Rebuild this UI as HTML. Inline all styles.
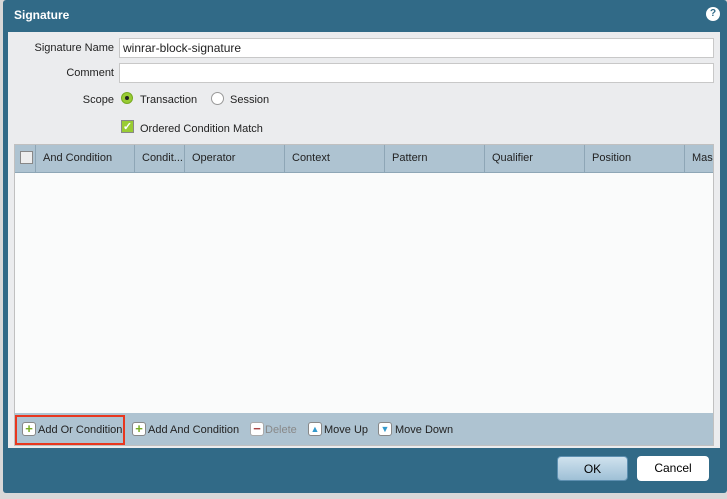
<!DOCTYPE html>
<html><head><style>
body{margin:0;width:727px;height:499px;background:#d8d8d8;font-family:"Liberation Sans",sans-serif;font-size:11px;color:#222;position:relative;overflow:hidden}
.dlg{position:absolute;left:3px;top:0;width:724px;height:493px;background:#316a87;border-radius:3px}
.title{position:absolute;left:11px;top:8px;color:#fff;font-weight:bold;font-size:12px}
.help{position:absolute;left:703px;top:7px;width:14px;height:14px;border-radius:50%;background:#fff;color:#316a87;font-size:10px;font-weight:bold;text-align:center;line-height:14px}
.body{position:absolute;left:8px;top:32px;width:712px;height:416px;background:#ebecee}
.lbl{position:absolute;text-align:right;width:106px;left:0}
.inp{position:absolute;left:119px;width:593px;height:18px;background:#fff;border:1px solid #c8c8c8}
.inp span{position:absolute;left:3px;top:2px;font-size:12px}
.grid{position:absolute;left:14px;top:144px;width:700px;height:302px;background:#fafbfb;border:1px solid #c0c0c0;box-sizing:border-box;overflow:hidden}
.hdr{position:absolute;left:0;top:0;height:27px;width:720px;background:#aec3d1;border-bottom:1px solid #8ea6b6}
.hdr div{position:absolute;top:0;height:27px;line-height:27px;padding-left:7px;border-left:1px solid #8ea6b6;box-sizing:border-box}
.tb{position:absolute;left:0;bottom:0;width:100%;height:32px;background:#aec3d1}
.tb span{position:absolute;top:11px;font-size:11px}
.ic{position:absolute;top:9px;width:12px;height:12px;border:1px solid #888;border-radius:3px;background:#fff;font-weight:bold;font-size:13px;line-height:12px;text-align:center}
.btn{position:absolute;top:456px;height:25px;border-radius:4px;text-align:center;line-height:25px;font-size:12px;color:#000}
</style></head><body>
<div class="dlg">
<div class="title">Signature</div>
<div class="help">?</div>
</div>
<div class="body">
<div class="lbl" style="top:10px">Signature Name</div>
<div class="lbl" style="top:35px">Comment</div>
<div class="lbl" style="top:62px">Scope</div>
<div class="inp" style="top:6px;left:111px"><span>winrar-block-signature</span></div>
<div class="inp" style="top:31px;left:111px"></div>
<div style="position:absolute;left:113px;top:60px;width:12px;height:12px;border-radius:50%;background:#9c3;border:1px solid #7a2;box-sizing:border-box"><div style="position:absolute;left:3px;top:3px;width:4px;height:4px;border-radius:50%;background:#222"></div></div>
<div style="position:absolute;left:132px;top:62px">Transaction</div>
<div style="position:absolute;left:203px;top:60px;width:13px;height:13px;border-radius:50%;background:#fff;border:1px solid #999;box-sizing:border-box"></div>
<div style="position:absolute;left:222px;top:62px">Session</div>
<div style="position:absolute;left:113px;top:88px;width:13px;height:13px;background:#9c3;border:1px solid #888;box-sizing:border-box;color:#fff;font-size:11px;line-height:12px;text-align:center;font-weight:bold">✓</div>
<div style="position:absolute;left:132px;top:91px">Ordered Condition Match</div>
</div>
<div class="grid">
<div class="hdr">
<div style="left:0;border-left:none;width:20px"><span style="position:absolute;left:5px;top:6px;width:11px;height:11px;background:#eee;border:1px solid #888"></span></div>
<div style="left:20px">And Condition</div>
<div style="left:119px">Condit...</div>
<div style="left:169px">Operator</div>
<div style="left:269px">Context</div>
<div style="left:369px">Pattern</div>
<div style="left:469px">Qualifier</div>
<div style="left:569px">Position</div>
<div style="left:669px">Mask</div>
</div>
<div class="tb">
<div style="position:absolute;left:0;top:2px;width:110px;height:30px;border:2px solid #e8371f;box-sizing:border-box"></div>
<div class="ic" style="left:7px;color:#7a2">+</div><span style="left:23px">Add Or Condition</span>
<div class="ic" style="left:117px;color:#7a2">+</div><span style="left:133px">Add And Condition</span>
<div class="ic" style="left:235px;color:#a44;border-color:#aaa">−</div><span style="left:250px;color:#888">Delete</span>
<div class="ic" style="left:293px;color:#39c;font-size:9px">▲</div><span style="left:309px">Move Up</span>
<div class="ic" style="left:363px;color:#39c;font-size:9px">▼</div><span style="left:380px">Move Down</span>
</div>
</div>
<div class="btn" style="left:557px;width:71px;background:linear-gradient(#cfe2ee,#9fc0d6);border:1px solid #5d8fb0;box-sizing:border-box">OK</div>
<div class="btn" style="left:637px;width:72px;background:#fff">Cancel</div>
</body></html>
